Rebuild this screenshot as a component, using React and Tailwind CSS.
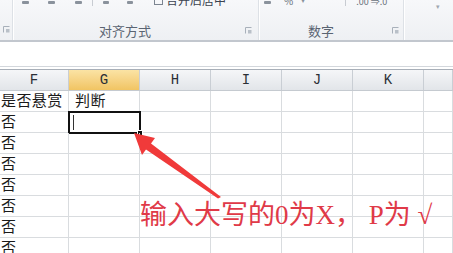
import React from "react";

const CJK = { fontFamily: '"Noto Sans CJK SC", "Noto Sans", sans-serif' };
const CELL = { fontFamily: '"Liberation Serif", "Noto Sans CJK SC", serif' };
const HEAD = { fontFamily: '"Liberation Mono", "DejaVu Sans Mono", monospace' };

function Launcher() {
  return (
    <svg width="7" height="7" viewBox="0 0 7 7" className="shrink-0">
      <path d="M0.5 6.5 V0.5 H6.5" fill="none" stroke="#a8b0ba" strokeWidth="1" />
      <rect x="3" y="3" width="3.5" height="3.5" fill="#b9c0c8" />
    </svg>
  );
}

function Sep() {
  return <div className="w-[2px] h-full border-l border-[#dde1e6] bg-white shrink-0" />;
}

function Bit({ w = 7, ml = 0 }) {
  return <div className="h-[3px] bg-[#8a929c] rounded-[1px] shrink-0" style={{ width: w, marginLeft: ml }} />;
}

const rows = [
  ["是否悬赏", "判断"],
  ["否", ""],
  ["否", ""],
  ["否", ""],
  ["否", ""],
  ["否", ""],
  ["否", ""],
  ["否", ""],
];

const colW = ["w-[69px]", "w-[71px]", "w-[71px]", "w-[71px]", "w-[71px]", "w-[71px]", "flex-1"];
const heads = ["F", "G", "H", "I", "J", "K", ""];

export default function App() {
  return (
    <div className="relative w-[453px] h-[253px] overflow-hidden bg-white">
      {/* Ribbon */}
      <div className="h-[42px] flex bg-gradient-to-b from-[#f7f8fa] to-[#eef0f3] border-b-2 border-[#c2c7ce]" style={CJK}>
        {/* group 0 */}
        <div className="w-[12px] flex flex-col shrink-0">
          <div className="flex-1" />
          <div className="h-[18px] flex items-start pt-[4px] pl-[3px]"><Launcher /></div>
        </div>
        <Sep />
        {/* group alignment */}
        <div className="w-[244px] flex flex-col shrink-0">
          <div className="h-[6px] flex items-end overflow-hidden pb-[2px]">
            <Bit w={7} ml={8} />
            <Bit w={7} ml={19} />
            <Bit w={7} ml={20} />
            <div className="w-px h-[6px] bg-[#c8ccd2] ml-[10px] self-start" />
            <Bit w={6} ml={10} />
            <Bit w={6} ml={18} />
          </div>
          <div className="h-0 relative">
            <div className="absolute left-[140px] -top-[6px] h-[6px] overflow-hidden flex items-end">
              <div className="w-[9px] h-[8px] border border-[#7c8591] mr-[3px] mb-[1px]" />
              <span className="text-[12px] leading-[12px] text-[#3b4350] whitespace-nowrap">合并后居中</span>
            </div>
          </div>
          <div className="flex-1" />
          <div className="h-[18px] flex items-start">
            <span className="ml-[85px] text-[13px] leading-[18px] text-[#5a6472]">对齐方式</span>
            <div className="ml-auto mr-[6px] pt-[5px]"><Launcher /></div>
          </div>
        </div>
        <Sep />
        {/* group number */}
        <div className="w-[143px] flex flex-col shrink-0">
          <div className="h-[6px] flex items-end overflow-hidden pb-[2px]">
            <Bit w={7} ml={4} />
            <span className="ml-[13px] text-[10px] leading-[10px] text-[#6a727c] -mb-[2px]">%</span>
            <span className="ml-[8px] text-[8px] leading-[8px] text-[#8a929c]">▾</span>
            <div className="w-px h-[6px] bg-[#c8ccd2] ml-[40px] self-start" />
            <span className="ml-[10px] text-[9px] leading-[9px] text-[#6a727c] -mb-[2px] whitespace-nowrap">.00 ⇒.0</span>
          </div>
          <div className="flex-1" />
          <div className="h-[18px] flex items-start">
            <span className="ml-[48px] text-[13px] leading-[18px] text-[#5a6472]">数字</span>
            <div className="ml-auto mr-[4px] pt-[5px]"><Launcher /></div>
          </div>
        </div>
        <Sep />
        <div className="flex-1 flex flex-col">
          <div className="h-[10px] flex items-end overflow-hidden">
            <span className="ml-[31px] text-[7px] leading-[7px] text-[#a0a7b0]">▾</span>
          </div>
        </div>
      </div>

      {/* Formula area */}
      <div className="h-[25px] bg-white border-b border-[#d3d7dc]" />
      <div className="h-[2px] bg-white" />

      {/* Column headers */}
      <div className="flex h-[22px] border-t border-[#a8afb8] border-b border-b-[#c5cad0]" style={HEAD}>
        {heads.map((h, i) => (
          <div
            key={i}
            className={`${colW[i]} shrink-0 border-r border-[#c9ced4] flex items-center justify-center text-[14px] text-[#2a2f36] ${
              h === "G" ? "bg-gradient-to-b from-[#fbe3a4] to-[#f1c462]" : "bg-gradient-to-b from-[#f5f6f8] to-[#e2e5e9]"
            }`}
          >
            {h}
          </div>
        ))}
      </div>

      {/* Rows */}
      {rows.map((r, ri) => (
        <div key={ri} className="flex h-[21px] border-b border-[#d9dcdf]">
          {colW.map((w, ci) => (
            <div
              key={ci}
              className={`${w} shrink-0 border-r border-[#d9dcdf] relative flex items-center text-[15px] tracking-[0.4px] text-[#1a1a1a] ${
                ci === 0 ? "pl-[1px]" : "pl-[6px]"
              }`}
              style={CELL}
            >
              {ci === 0 ? r[0] : ci === 1 ? r[1] : ""}
              {ri === 1 && ci === 1 && (
                <>
                  <div className="absolute -left-[1px] -top-[1px] w-[73px] h-[23px] border-2 border-[#111]" />
                  <div className="absolute left-[4px] top-[3px] w-px h-[15px] bg-[#333]" />
                  <div className="absolute -right-[4px] -bottom-[4px] w-[6px] h-[6px] bg-[#111] border border-white" />
                </>
              )}
            </div>
          ))}
        </div>
      ))}

      {/* Arrow annotation */}
      <svg className="absolute left-0 top-0 pointer-events-none" width="453" height="253" viewBox="0 0 453 253">
        <polygon
          points="134,133 155,138 151,143.5 221,197 218,198.5 146,149.5 142,155"
          fill="#f03a3a"
        />
      </svg>

      {/* Annotation text */}
      <div
        className="absolute left-[140px] top-[200px] text-[27px] leading-[30px] text-[#e03a48] whitespace-nowrap"
        style={{ fontFamily: '"Liberation Serif", "Noto Sans CJK SC", serif' }}
      >
        输入大写的0为X， P为 √
      </div>
    </div>
  );
}
